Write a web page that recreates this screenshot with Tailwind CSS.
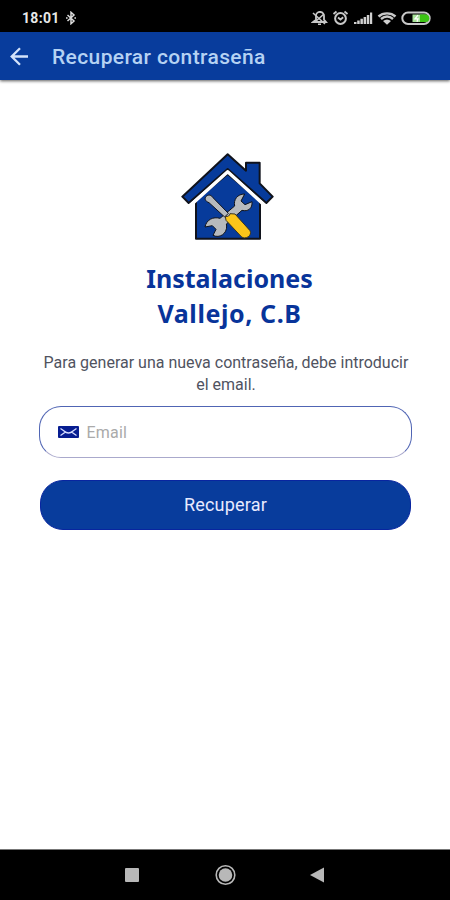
<!DOCTYPE html>
<html lang="es">
<head>
<meta charset="utf-8">
<title>Recuperar contraseña</title>
<script src="https://cdn.jsdelivr.net/npm/@tailwindcss/browser@4"></script>
</head>
<body class="w-[450px] h-[900px] flex flex-col overflow-hidden bg-white font-['Roboto',sans-serif]">
  <div class="h-8 shrink-0 bg-black flex items-center justify-between pl-[22px] pr-[19px] pt-1">
    <div class="flex items-center gap-[5px]">
      <span class="text-[14px] leading-none font-bold text-[#e8e8e8] tracking-[0.3px]">18:01</span>
      <svg class="w-[12px] h-[14px]" viewBox="0 0 12 14" fill="none" stroke="#dcdcdc" stroke-width="1.5"><path d="M2.5 4 9 10 6 12.7V1.3L9 4 2.5 10"/><path d="M1 7h1.6M9.4 7H11"/></svg>
    </div>
    <svg class="w-[120px] h-4" viewBox="0 0 120 16" fill="none" stroke="#c8c8c8">
      <path d="M2 12h13l-2-2.300V6.500a4 4 0 0 0-8-1V9.700z" stroke-width="1.8"/><path d="M7 14.200h3M8.700 1v1.600M2 3l12 11M4 12l9-8" stroke-width="1.600"/>
      <circle cx="29.500" cy="8.500" r="5.400" stroke-width="2"/><path d="M22.500 4l3-2.500M36.500 4l-3-2.500M27 7.500l2.500 2 2.700-2.300" stroke-width="1.800"/>
      <g fill="#d0d0d0" stroke="none"><path d="M43 12h2.500v2H43zM46.200 10.500h2.500V14h-2.500zM49.400 8.800h2.500V14h-2.500zM52.600 7h2.500v7h-2.500zM55.800 5h2.500v9h-2.500zM59 2.500h2.200V14h-2.200z"/></g>
      <path d="M67.500 6.500c4.500-4.200 12.500-4.200 17 0M70 9c3.800-3.200 8.400-3.200 12 0" stroke-width="2.400"/><path d="M72 11c2.500-2 5.500-2 8 0l-4 3.800z" fill="#d0d0d0" stroke="none"/>
      <rect x="91.300" y="2.600" width="27.400" height="11.400" rx="5.700" stroke-width="2"/><path d="M101.500 4.500H114a3.500 3.500 0 0 1 0 7.600h-12.500z" fill="#a8e39a" stroke="none"/><path d="M109 4.500h5.500a3.600 3.600 0 0 1 0 7.600H109z" fill="#3cc414" stroke="none"/><path d="m107 5.200-3 3.600h3l-1 3" stroke="#fff" stroke-width="1.300"/>
    </svg>
  </div>
  <header class="h-[48px] shrink-0 bg-[#083c9c] flex items-center pl-[10px] pt-px gap-[23px] shadow-[0_1px_3px_rgba(0,0,0,0.65)]">
    <svg class="w-[19px] h-[19px]" viewBox="0 0 19 19" fill="none" stroke="#d3e2fa" stroke-width="2.300"><path d="M18 9.500H2M10 1.200 1.700 9.500l8.300 8.300"/></svg>
    <h1 class="pt-px text-[21px] leading-none font-medium tracking-[0.38px] text-[#b5d2f3]">Recuperar contraseña</h1>
  </header>
  <main class="flex-1 flex flex-col items-center pt-[65px]">
    <svg class="w-[110px] h-[100px] shrink-0" viewBox="0 0 330 300" stroke="#10131c" stroke-width="6" stroke-linejoin="round">
      <path d="M78 281V165L173 87l97 80v114z" fill="#073b9b"/>
      <path d="M37 155 173 28l55 49V53h41v62l39 40-19 19L173 72 56 174z" fill="#073b9b"/>
      <path d="M60 182 173 80l112 102" fill="none" stroke="#fff" stroke-width="10"/>
      <path d="M224 147c-22 0-34 17-30 36l-44 37c-20-6-41 4-45 26l22-4 11 11-9 18c20 10 42-5 41-28l-1-6 47-41c18 5 32-6 30-26l-21 9-12-11z" fill="#b7babd" stroke-width="3"/>
      <path d="M110 153c7-5 14-3 20 6l45 46-11 11-47-43c-12-4-15-14-7-20z" fill="#b7babd" stroke-width="3"/>
      <path d="M166 214c8 2 13-2 14-8l15 1 45 50c8 14-14 29-26 18l-46-49z" fill="#fcc51a" stroke="#3b3420" stroke-width="3"/>
    </svg>
    <h2 class="mt-[16px] pl-[9px] text-center font-['Noto_Sans',sans-serif] font-bold text-[25px] leading-[35px] text-[#08349a]">Instalaciones<br><span class="tracking-[0.6px]">Vallejo, C.B</span></h2>
    <p class="mt-[21px] w-[390px] pl-[2px] text-center text-[16px] leading-[22px] text-[#50535f]">Para generar una nueva contraseña, debe introducir<br>el email.</p>
    <label class="mt-[10px] w-[373px] h-[52px] shrink-0 rounded-[22px] border border-[#5065b4] border-b-[#aaa9cc] flex items-center pl-[18px] gap-[8px]">
      <svg class="w-[21px] h-[12px]" viewBox="0 0 21 12"><rect width="21" height="12" rx="1" fill="#071d91"/><path d="M2.500 2.500 7.500 6l-5 3.500M18.500 2.500l-5 3.500 5 3.500M6 5q4.500 4 9 0" fill="none" stroke="#d5dcff" stroke-width="1.300"/></svg>
      <span class="pt-[2px] text-[16px] leading-none tracking-[0.2px] text-[#aaa]">Email</span>
    </label>
    <button class="mt-[22px] w-[371px] h-[50px] shrink-0 rounded-[23px] bg-[#083c9c] border border-[#0825a0] pb-[2px] pl-[1px] text-[18px] tracking-[0.2px] text-[#e8eaff]">Recuperar</button>
  </main>
  <nav class="h-[51px] shrink-0 bg-black border-t border-[#777] flex items-center pl-[125px]">
    <svg class="w-[200px] h-[22px]" viewBox="0 0 200 22" fill="#b8b8b8"><rect y="4" width="14" height="14" rx="1"/><circle cx="100.500" cy="11" r="9.300" fill="none" stroke="#b8b8b8" stroke-width="1.600"/><circle cx="100.500" cy="11" r="6.800"/><path d="M185 11l14-7.500v15z"/></svg>
  </nav>
</body>
</html>
